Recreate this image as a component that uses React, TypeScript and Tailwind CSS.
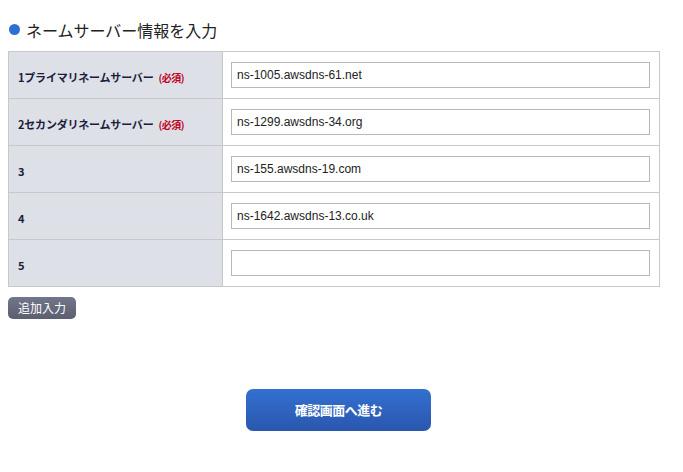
const ROWS = [
  { label: "1プライマリネームサーバー", required: true, value: "ns-1005.awsdns-61.net" },
  { label: "2セカンダリネームサーバー", required: true, value: "ns-1299.awsdns-34.org" },
  { label: "3", required: false, value: "ns-155.awsdns-19.com" },
  { label: "4", required: false, value: "ns-1642.awsdns-13.co.uk" },
  { label: "5", required: false, value: "" },
];

const jp = "font-['Meiryo','Noto_Sans_CJK_JP',sans-serif]";

export default function App() {
  return (
    <div className={`min-h-[472px] w-[683px] bg-white px-2 pt-[17px] ${jp}`}>
      <h2 className="flex h-[25px] items-center gap-[6px] pl-px text-[16px] font-normal leading-none text-[#222]">
        <span className="h-[11px] w-[11px] rounded-full bg-[#2f6fd0]" aria-hidden="true" />
        ネームサーバー情報を入力
      </h2>

      <table className="mt-[9px] w-[652px] border-collapse border border-[#c8c8c8]">
        <tbody>
          {ROWS.map((r) => (
            <tr key={r.label} className="h-[47px] border-b border-[#c8c8c8]">
              <th className="w-[214px] border-r border-[#c8c8c8] bg-[#dde1e7] pl-[9px] text-left align-middle">
                <span className="text-[11px] font-bold tracking-[-0.2px] text-[#1c1c3c]">
                  {r.label}
                </span>
                {r.required ? (
                  <span className="ml-[5px] text-[10px] font-bold tracking-[-0.5px] text-[#c0001c]">(必須)</span>
                ) : null}
              </th>
              <td className="px-2 align-middle">
                <input
                  defaultValue={r.value}
                  className="block h-[26px] w-[419px] border border-[#b8b8b8] bg-white px-[5px] font-['Liberation_Sans',sans-serif] text-[12px] text-[#222] outline-none"
                />
              </td>
            </tr>
          ))}
        </tbody>
      </table>

      <button className="mt-[10px] block h-[22px] w-[68px] rounded-[5px] bg-gradient-to-b from-[#72768a] to-[#5b5f70] text-[12px] leading-none text-white">
        追加入力
      </button>

      <div className="mt-[70px] flex justify-center pr-[6px]">
        <button className="h-[42px] w-[185px] rounded-[7px] bg-gradient-to-b from-[#3470d0] to-[#2a57ae] text-[13px] font-bold tracking-[-0.5px] text-white">
          確認画面へ進む
        </button>
      </div>
    </div>
  );
}
